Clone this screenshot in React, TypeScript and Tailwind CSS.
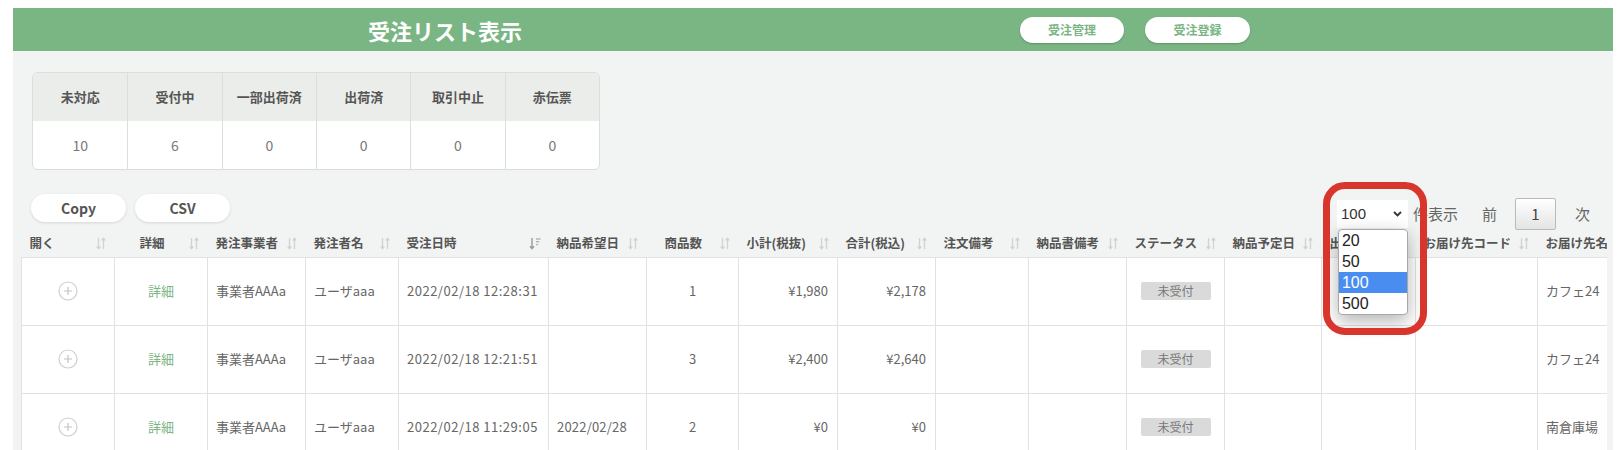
import React from "react";

const GREEN = "#7ab584";

type Row = {
  date: string;
  wish: string;
  qty: string;
  sub: string;
  total: string;
  dest: string;
};

const rows: Row[] = [
  { date: "2022/02/18 12:28:31", wish: "", qty: "1", sub: "¥1,980", total: "¥2,178", dest: "カフェ24" },
  { date: "2022/02/18 12:21:51", wish: "", qty: "3", sub: "¥2,400", total: "¥2,640", dest: "カフェ24" },
  { date: "2022/02/18 11:29:05", wish: "2022/02/28", qty: "2", sub: "¥0", total: "¥0", dest: "南倉庫場" },
];

const statuses = [
  { label: "未対応", count: 10 },
  { label: "受付中", count: 6 },
  { label: "一部出荷済", count: 0 },
  { label: "出荷済", count: 0 },
  { label: "取引中止", count: 0 },
  { label: "赤伝票", count: 0 },
];

// header label, width, left padding, active sort
const columns: { label: string; w: number; pl?: number; active?: boolean }[] = [
  { label: "開く", w: 93 },
  { label: "詳細", w: 93, pl: 25 },
  { label: "発注事業者", w: 98 },
  { label: "発注者名", w: 93 },
  { label: "受注日時", w: 150, active: true },
  { label: "納品希望日", w: 98 },
  { label: "商品数", w: 92, pl: 18 },
  { label: "小計(税抜)", w: 99 },
  { label: "合計(税込)", w: 98 },
  { label: "注文備考", w: 93 },
  { label: "納品書備考", w: 98 },
  { label: "ステータス", w: 98 },
  { label: "納品予定日", w: 97 },
  { label: "出荷日", w: 94 },
  { label: "お届け先コード", w: 122 },
  { label: "お届け先名", w: 130 },
];

function SortIcon({ active }: { active?: boolean }) {
  if (active) {
    return (
      <svg width="12" height="13" viewBox="0 0 12 13" className="shrink-0">
        <path d="M3 1v10.5M1 9.3l2 2.4 2-2.4" stroke="#9a9a9a" strokeWidth="1.4" fill="none" />
        <path d="M7 2h4.5M7 4.8h3.3M7 7.6h2.2" stroke="#b5b5b5" strokeWidth="1.4" fill="none" />
      </svg>
    );
  }
  return (
    <svg width="12" height="13" viewBox="0 0 12 13" className="shrink-0">
      <path d="M3.5 1v10.5M1.7 9.5l1.8 2.2 1.8-2.2" stroke="#d2d2d2" strokeWidth="1.3" fill="none" />
      <path d="M8.5 12V1.5M6.7 3.5l1.8-2.2 1.8 2.2" stroke="#d2d2d2" strokeWidth="1.3" fill="none" />
    </svg>
  );
}

function PlusCircle() {
  return (
    <svg width="20" height="20" viewBox="0 0 20 20">
      <circle cx="10" cy="10" r="9" stroke="#cfcfcf" strokeWidth="1.2" fill="white" />
      <path d="M10 6v8M6 10h8" stroke="#c4c4c4" strokeWidth="1.2" />
    </svg>
  );
}

export default function App() {
  return (
    <div className="relative w-[1624px] h-[450px] overflow-hidden bg-white pt-[8px] pl-[13px] pr-[11px] font-['Noto_Sans_CJK_JP','Noto_Sans',sans-serif] text-[#666]">
      {/* title bar */}
      <div className="flex items-center h-[43px] bg-[#7ab584]">
        <h1 className="ml-[355px] w-[153px] whitespace-nowrap text-[22px] font-bold leading-none text-white">
          受注リスト表示
        </h1>
        <button className="ml-[499px] h-[26px] w-[104px] rounded-full bg-white text-[12px] font-bold text-[#7ab584] shadow-[0_1px_2px_rgba(0,0,0,0.2)]">
          受注管理
        </button>
        <button className="ml-[21px] h-[26px] w-[105px] rounded-full bg-white text-[12px] font-bold text-[#7ab584] shadow-[0_1px_2px_rgba(0,0,0,0.2)]">
          受注登録
        </button>
      </div>

      <div className="bg-[#f2f4f3] pt-[21px] h-[400px]">
        {/* status summary */}
        <div className="ml-[19px] w-[568px] overflow-hidden rounded-[6px] border border-[#dcdedc]">
          <div className="grid grid-cols-6 h-[48px] bg-[#ebedea]">
            {statuses.map((s, i) => (
              <div
                key={s.label}
                className={`flex items-center justify-center text-[13px] font-bold text-[#555] ${i > 0 ? "border-l border-[#dcdedc]" : ""}`}
              >
                {s.label}
              </div>
            ))}
          </div>
          <div className="grid grid-cols-6 h-[48px] bg-white">
            {statuses.map((s, i) => (
              <div
                key={s.label}
                className={`flex items-center justify-center text-[14px] text-[#777] ${i > 0 ? "border-l border-[#dcdedc]" : ""}`}
              >
                {s.count}
              </div>
            ))}
          </div>
        </div>

        {/* buttons + pagination */}
        <div className="flex items-start justify-between mt-[24px] h-[36px] pl-[18px] pr-[23px]">
          <div className="flex gap-[9px]">
            <button className="h-[28px] w-[95px] rounded-full bg-white text-[14px] font-bold text-[#555] shadow-[0_1px_3px_rgba(0,0,0,0.12)]">
              Copy
            </button>
            <button className="h-[28px] w-[95px] rounded-full bg-white text-[14px] font-bold text-[#555] shadow-[0_1px_3px_rgba(0,0,0,0.12)]">
              CSV
            </button>
          </div>
          <div className="flex items-center mt-[4px] text-[15px] text-[#666]">
            <div className="relative">
              <div className="flex items-center justify-between h-[28px] w-[71px] bg-white pl-[4px] pr-[6px] font-['Liberation_Sans',sans-serif] text-[15px] text-[#333]">
                100
                <svg width="9" height="6" viewBox="0 0 9 6">
                  <path d="M1 1l3.5 3.5L8 1" stroke="#333" strokeWidth="1.8" fill="none" />
                </svg>
              </div>
              <div className="absolute left-[1px] top-[29px] z-10 w-[70px] overflow-hidden rounded-[4px] border border-[#a8a8a8] bg-white font-['Liberation_Sans',sans-serif] text-[16px] leading-[21px] text-[#222] shadow-[0_6px_18px_rgba(0,0,0,0.3)]">
                <div className="pl-[3px]">20</div>
                <div className="pl-[3px]">50</div>
                <div className="pl-[3px] bg-[#4a8df0] text-white">100</div>
                <div className="pl-[3px]">500</div>
              </div>
              <div className="absolute left-[-14px] top-[-18px] z-20 h-[153px] w-[104px] rounded-[22px] border-[7px] border-[#d8352d]" />
            </div>
            <span className="ml-[5px]">件表示</span>
            <span className="ml-[24px]">前</span>
            <div className="ml-[18px] flex h-[32px] w-[41px] items-center justify-center rounded-[2px] border border-[#b9b9b9] bg-gradient-to-b from-white to-[#e4e4e4] text-[#444]">
              1
            </div>
            <span className="ml-[19px]">次</span>
          </div>
        </div>

        {/* table */}
        <div className="ml-[8px] mr-[6px] mt-[1px] overflow-hidden">
          <table className="table-fixed border-collapse w-[1646px]">
            <colgroup>
              {columns.map((c) => (
                <col key={c.label} style={{ width: c.w }} />
              ))}
            </colgroup>
            <thead>
              <tr className="h-[26px] border-b border-[#dcdcdc]">
                {columns.map((c) => (
                  <th key={c.label} className="p-0 text-left align-middle">
                    <div
                      className="flex items-center justify-between pr-[8px] text-[12.5px] font-bold text-[#555] whitespace-nowrap"
                      style={{ paddingLeft: c.pl ?? 8 }}
                    >
                      <span>{c.label}</span>
                      <SortIcon active={c.active} />
                    </div>
                  </th>
                ))}
              </tr>
            </thead>
            <tbody>
              {rows.map((r, i) => (
                <tr key={i} className="h-[68px] bg-white text-[13px] text-[#666]">
                  <td className="border border-[#e2e2e2] text-center align-middle">
                    <div className="flex justify-center">
                      <PlusCircle />
                    </div>
                  </td>
                  <td className="border border-[#e2e2e2] text-center" style={{ color: GREEN }}>
                    詳細
                  </td>
                  <td className="border border-[#e2e2e2] px-[8px]">事業者AAAa</td>
                  <td className="border border-[#e2e2e2] px-[8px]">ユーザaaa</td>
                  <td className="border border-[#e2e2e2] px-[8px] whitespace-nowrap tracking-[0.5px]">{r.date}</td>
                  <td className="border border-[#e2e2e2] px-[8px] tracking-[0.2px]">{r.wish}</td>
                  <td className="border border-[#e2e2e2] text-center">{r.qty}</td>
                  <td className="border border-[#e2e2e2] px-[9px] text-right">{r.sub}</td>
                  <td className="border border-[#e2e2e2] px-[9px] text-right">{r.total}</td>
                  <td className="border border-[#e2e2e2]" />
                  <td className="border border-[#e2e2e2]" />
                  <td className="border border-[#e2e2e2]">
                    <div className="mx-auto flex h-[18px] w-[70px] items-center justify-center rounded-[2px] bg-[#dadada] text-[12px] text-[#777]">
                      未受付
                    </div>
                  </td>
                  <td className="border border-[#e2e2e2]" />
                  <td className="border border-[#e2e2e2]" />
                  <td className="border border-[#e2e2e2]" />
                  <td className="border border-[#e2e2e2] px-[8px]">{r.dest}</td>
                </tr>
              ))}
            </tbody>
          </table>
        </div>
      </div>
    </div>
  );
}
